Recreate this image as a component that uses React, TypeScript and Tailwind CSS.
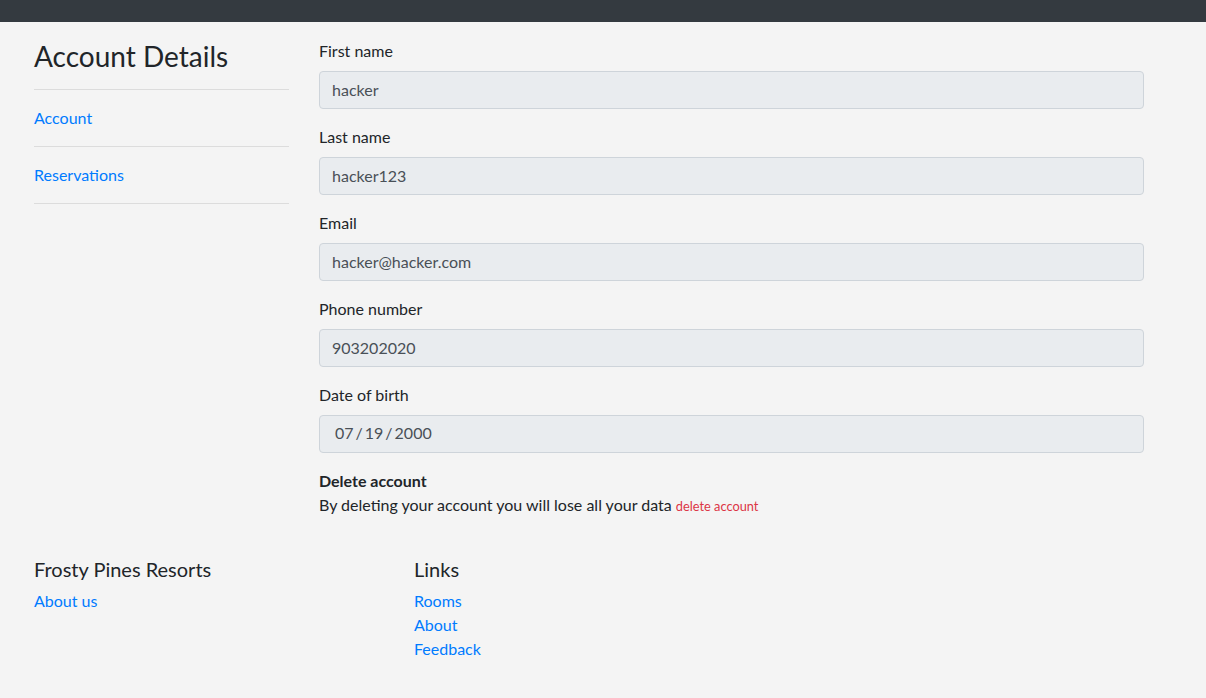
const fields = [
  { label: 'First name', value: 'hacker' },
  { label: 'Last name', value: 'hacker123' },
  { label: 'Email', value: 'hacker@hacker.com' },
  { label: 'Phone number', value: '903202020' },
];

const App = () => {
  return (
    <div className="min-h-screen bg-[#f4f4f4] text-[#212529] font-['Lato','Liberation_Sans',sans-serif] text-base leading-6">
      {/* navbar (cut off) */}
      <div className="h-[22px] bg-[#343a40]" />

      <div className="px-[34px] pt-[17px]">
        <div className="flex gap-[30px]">
          {/* Sidebar */}
          <div className="w-[255px] shrink-0">
            <h3 className="mt-px mb-[15px] text-[28px] leading-[1.2] font-normal">Account Details</h3>
            <ul className="border-t border-[#dcdcdc]">
              <li className="border-b border-[#dcdcdc] py-4">
                <a href="#" className="text-[#007bff]">Account</a>
              </li>
              <li className="border-b border-[#dcdcdc] py-4">
                <a href="#" className="text-[#007bff]">Reservations</a>
              </li>
            </ul>
          </div>

          {/* Form */}
          <div className="w-[825px]">
            {fields.map((f) => (
              <div key={f.label} className="mb-4">
                <label className="mb-2 block">{f.label}</label>
                <input
                  readOnly
                  value={f.value}
                  className="block h-[38px] w-full rounded border border-[#ced4da] bg-[#e9ecef] px-3 pb-[2px] text-[#495057] outline-none"
                />
              </div>
            ))}
            <div className="mb-4">
              <label className="mb-2 block">Date of birth</label>
              <div className="flex h-[38px] w-full items-center rounded border border-[#ced4da] bg-[#e9ecef] pl-[15px] pb-[2px] text-[#495057]">
                {'07\u2009/\u200919\u2009/\u20092000'}
              </div>
            </div>
            <p className="font-bold">Delete account</p>
            <p>
              By deleting your account you will lose all your data{' '}
              <a href="#" className="text-[12.8px] text-[#dc3545]">delete account</a>
            </p>
          </div>
        </div>

        {/* Footer */}
        <footer className="mt-[39px] flex pb-9">
          <div className="w-[380px]">
            <h5 className="mb-2 text-xl leading-6 font-normal">Frosty Pines Resorts</h5>
            <a href="#" className="text-[#007bff]">About us</a>
          </div>
          <div className="w-[380px]">
            <h5 className="mb-2 text-xl leading-6 font-normal">Links</h5>
            <ul>
              <li><a href="#" className="text-[#007bff]">Rooms</a></li>
              <li><a href="#" className="text-[#007bff]">About</a></li>
              <li><a href="#" className="text-[#007bff]">Feedback</a></li>
            </ul>
          </div>
        </footer>
      </div>
    </div>
  );
};

export default App;
